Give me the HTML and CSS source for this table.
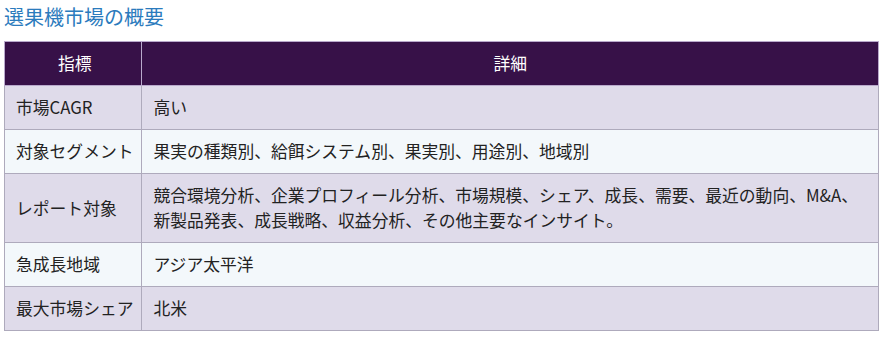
FILE: index.html
```html
<!DOCTYPE html>
<html lang="ja">
<head>
<meta charset="utf-8">
<link rel="stylesheet" href="styles.css">
</head>
<body>
<h3 class="title">選果機市場の概要</h3>
<table class="summary">
  <thead>
    <tr><th class="col-key">指標</th><th>詳細</th></tr>
  </thead>
  <tbody>
    <tr class="odd"><td class="key">市場CAGR</td><td>高い</td></tr>
    <tr class="even"><td class="key">対象セグメント</td><td>果実の種類別、給餌システム別、果実別、用途別、地域別</td></tr>
    <tr class="odd"><td class="key">レポート対象</td><td>競合環境分析、企業プロフィール分析、市場規模、シェア、成長、需要、最近の動向、M&amp;A、新製品発表、成長戦略、収益分析、その他主要なインサイト。</td></tr>
    <tr class="even"><td class="key">急成長地域</td><td>アジア太平洋</td></tr>
    <tr class="odd"><td class="key">最大市場シェア</td><td>北米</td></tr>
  </tbody>
</table>
</body>
</html>
```
FILE: styles.css
```css
html, body {
  margin: 0;
  padding: 0;
  background: #ffffff;
}
body {
  padding: 0 4px;
  font-family: "Noto Sans CJK JP", "Noto Sans", sans-serif;
}
.title {
  margin: 0;
  padding-top: 3px;
  height: 38px;
  font-size: 20px;
  line-height: 28px;
  font-weight: normal;
  color: #2b7bbd;
}
.summary {
  border-collapse: collapse;
  width: 875px;
  font-size: 16.8px;
  color: #222222;
}
.summary th {
  background: #371148;
  color: #ffffff;
  font-weight: normal;
  border: 1px solid #b9a9cc;
  padding: 9px 11px;
  line-height: 25px;
  text-align: center;
}
.summary .col-key {
  width: 115px;
  padding: 9px 8px 9px 11px;
}
.summary td {
  border: 1px solid #aeaabc;
  padding: 9px 10px 9px 11px;
  line-height: 25px;
  text-align: left;
  vertical-align: middle;
}
.summary td.key {
  white-space: nowrap;
  padding: 9px 8px 9px 11px;
}
.summary tr.odd td {
  background: #dfdbea;
}
.summary tr.even td {
  background: #f3f8fb;
}
```
